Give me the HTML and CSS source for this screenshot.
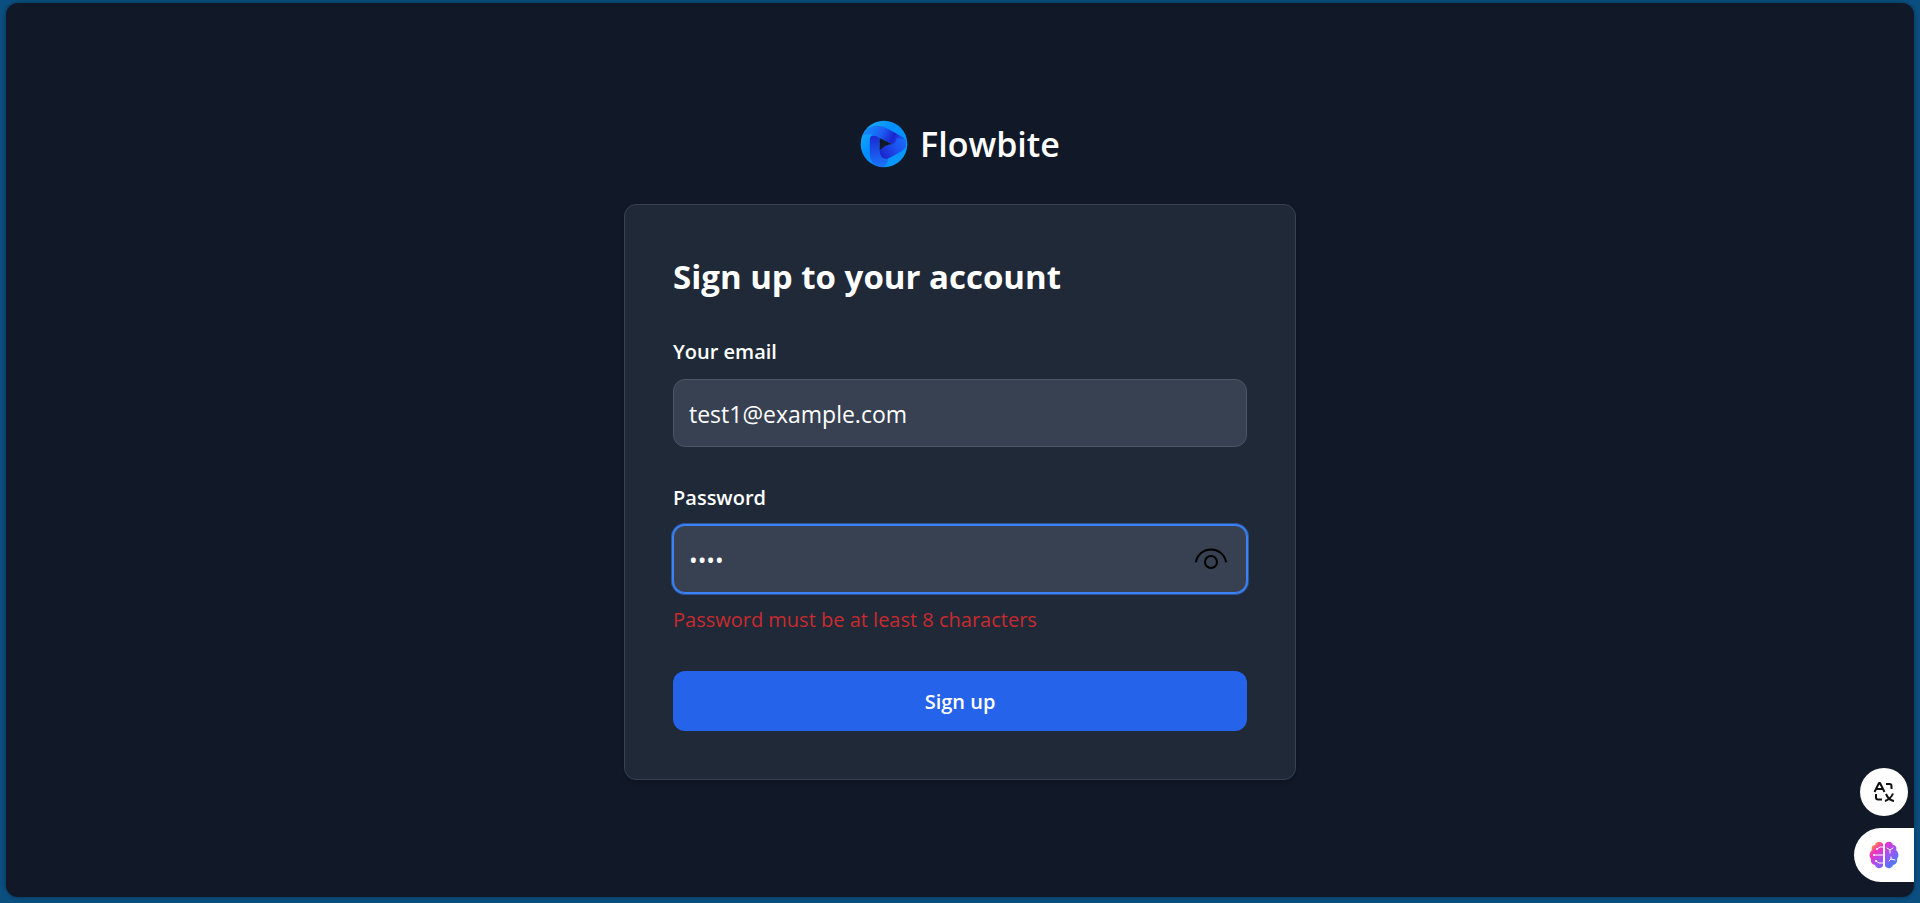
FILE: index.html
```html
<!DOCTYPE html>
<html lang="en">
<head>
<meta charset="utf-8">
<meta name="viewport" content="width=device-width, initial-scale=1">
<title>Flowbite – Sign up</title>
<link rel="stylesheet" href="styles.css">
</head>
<body>
<div class="window">
  <main class="signup">
    <a class="brand" href="#">
      <svg class="brand-logo" viewBox="16 16 142 142" aria-hidden="true">
        <defs>
          <linearGradient id="disc" x1="0" y1="0" x2="1" y2="1"><stop offset="0" stop-color="#24b4ff"/><stop offset=".4" stop-color="#008eff"/><stop offset="1" stop-color="#0a9cff"/></linearGradient>
          <linearGradient id="sweep" gradientUnits="userSpaceOnUse" x1="40" y1="36" x2="130" y2="80"><stop offset="0" stop-color="#1488fc"/><stop offset=".45" stop-color="#1d5cf3"/><stop offset=".8" stop-color="#1a24cd"/><stop offset="1" stop-color="#1c4aea"/></linearGradient>
          <linearGradient id="lower" gradientUnits="userSpaceOnUse" x1="150" y1="70" x2="76" y2="124"><stop offset="0" stop-color="#1670f8"/><stop offset=".45" stop-color="#1d4fee"/><stop offset="1" stop-color="#1a20c9"/></linearGradient>
          <linearGradient id="arm" gradientUnits="userSpaceOnUse" x1="60" y1="58" x2="72" y2="150"><stop offset="0" stop-color="#1b26d0"/><stop offset="1" stop-color="#1b70f8"/></linearGradient>
        </defs>
        <circle cx="87" cy="87" r="69" fill="url(#disc)"/>
        <path fill="url(#sweep)" d="M24 62C34 30 70 28 92 39L137 63C152 71 156 86 149 98L112 88L74 69C60 59 40 54 24 62Z"/>
        <path fill="url(#arm)" d="M45 74C46 58 60 59 74 69V108C74 124 84 132 98 126C100 140 94 152 82 156C54 152 45 134 45 114Z"/>
        <path fill="url(#lower)" d="M74 108C86 91 96 89 112 88C120 84 125 78 124 70L150 73C156 88 152 101 138 109L101 129C86 135 74 124 74 108Z"/>
        <path fill="#111827" d="M74 69L112 88C96 89 86 93 74 108Z"/>
      </svg>
      <span>Flowbite</span>
    </a>
    <section class="card">
      <h1 class="card-title">Sign up to your account</h1>
      <form class="form" onsubmit="return false" novalidate>
        <div class="field">
          <label class="label" for="email">Your email</label>
          <input class="input" id="email" type="email" value="test1@example.com">
        </div>
        <div class="field">
          <label class="label" for="password">Password</label>
          <div class="password">
            <input class="input input-active" id="password" type="password" value="test" aria-describedby="password-error">
            <button class="reveal" type="button" aria-label="Show password">
              <svg class="reveal-icon" viewBox="0 0 36 36" fill="none" stroke="#000" stroke-width="2" stroke-linecap="round" aria-hidden="true"><path d="M3 20.500C6.500 4.500 29.500 4.500 33 20.500"/><circle cx="18" cy="21" r="6"/></svg>
            </button>
          </div>
          <p class="error" id="password-error">Password must be at least 8 characters</p>
        </div>
        <button class="submit" type="submit">Sign up</button>
      </form>
    </section>
  </main>
  <div class="tools">
    <button class="tool-translate" type="button" aria-label="Translate">
      <svg class="tool-icon" viewBox="0 0 24 24" fill="none" stroke="#111" stroke-width="2" stroke-linejoin="round" aria-hidden="true"><path d="M2.500 12L7 3h1l4.500 9M4.500 9h6M14 4h3.500a2 2 0 0 1 2 2v3M4 14v3.500a2 2 0 0 0 2 2h4M21 13.500C20 16 17 19.500 13 21M14 14C15.500 17.500 18.500 20.500 22 21"/></svg>
    </button>
    <button class="tool-brain" type="button" aria-label="Assistant">
      <svg class="brain-icon" viewBox="0 0 30 28" aria-hidden="true">
        <defs><linearGradient id="brain" x1="0" y1="0" x2="1" y2="1"><stop offset=".1" stop-color="#ff9a2e"/><stop offset=".28" stop-color="#f02fc2"/><stop offset=".55" stop-color="#a452f5"/><stop offset=".9" stop-color="#3b82f6"/></linearGradient></defs>
        <path fill="url(#brain)" d="M14 3C12 0 7 0 6 4C3 4 2 7 3 9C0 11 0 16 2 18C1 21 4 24 6 24C7 28 12 28 14 25ZM16 3C18 0 23 0 24 4C27 4 28 7 27 9C30 11 30 16 28 18C29 21 26 24 24 24C23 28 18 28 16 25Z"/>
        <path fill="none" stroke="#fff" stroke-width="1" stroke-linecap="round" d="M14 6H11L8 8M5 14H14M14 22H10L7 20M18 7l3 2 3-2M21 9v3M20 20l2-2 4 1M22 18v-2"/>
        <circle cx="8" cy="8" r="1" fill="#fff"/><circle cx="5" cy="14" r="1" fill="#fff"/><circle cx="7" cy="20" r="1" fill="#fff"/>
      </svg>
    </button>
  </div>
</div>
</body>
</html>
```

FILE: styles.css
```css
* {
  box-sizing: border-box;
}

body {
  margin: 0;
  min-height: 100vh;
  display: flex;
  padding: 3px 6px 6px;
  background: #0b4f80;
  color: #fff;
  font-family: "Open Sans", "Noto Sans", sans-serif;
}

button,
input {
  font-family: inherit;
}

.window {
  position: relative;
  flex: 1;
  display: flex;
  align-items: center;
  justify-content: center;
  border-radius: 12px;
  background: #111827;
  box-shadow: 0 0 4px rgba(0, 0, 0, 0.4);
}

.signup {
  width: 100%;
  max-width: 672px;
  display: flex;
  flex-direction: column;
  align-items: center;
  gap: 36px;
}

.brand {
  display: flex;
  align-items: center;
  gap: 12px;
  color: #fff;
  font-size: 34px;
  font-weight: 600;
  line-height: 48px;
  text-decoration: none;
}

.brand-logo {
  width: 48px;
  height: 48px;
}

.card {
  width: 100%;
  padding: 48px;
  border: 1px solid #374151;
  border-radius: 12px;
  background: #1f2937;
  box-shadow: 0 2px 4px rgba(0, 0, 0, 0.2);
}

.card-title {
  margin: 0 0 36px;
  font-size: 33px;
  font-weight: 700;
  line-height: 48px;
}

.form {
  display: flex;
  flex-direction: column;
  gap: 36px;
}

.field {
  display: flex;
  flex-direction: column;
  gap: 12px;
}

.label {
  font-size: 20px;
  font-weight: 600;
  line-height: 30px;
}

.input {
  display: block;
  width: 100%;
  height: 68px;
  padding: 2px 15px 0;
  border: 1px solid #4b5563;
  border-radius: 12px;
  outline: 0;
  background: #374151;
  color: #fff;
  font-size: 23px;
}

.input-active {
  border-color: #3b82f6;
  box-shadow: 0 0 0 1px #3b82f6, 0 0 0 2px rgba(59, 130, 246, 0.5);
}

.password {
  position: relative;
}

.reveal {
  position: absolute;
  top: 0;
  bottom: 0;
  right: 18px;
  padding: 0;
  border: 0;
  background: none;
}

.reveal-icon {
  display: block;
  width: 36px;
  height: 36px;
}

.error {
  margin: 0;
  color: #c92a2f;
  font-size: 20px;
  line-height: 30px;
}

.submit {
  height: 60px;
  border: 0;
  border-radius: 12px;
  background: #2563eb;
  color: #fff;
  font-size: 20px;
  font-weight: 600;
}

.tools {
  position: absolute;
  right: 0;
  bottom: 15px;
  display: flex;
  flex-direction: column;
  align-items: flex-end;
  gap: 12px;
}

.tool-translate,
.tool-brain {
  display: flex;
  align-items: center;
  justify-content: center;
  padding: 0;
  border: 0;
  background: #fff;
}

.tool-translate {
  width: 48px;
  height: 48px;
  margin-right: 6px;
  border-radius: 50%;
}

.tool-brain {
  width: 60px;
  height: 54px;
  border-radius: 27px 0 0 27px;
}

.tool-icon {
  width: 24px;
  height: 24px;
}

.brain-icon {
  width: 30px;
  height: 28px;
}
```
